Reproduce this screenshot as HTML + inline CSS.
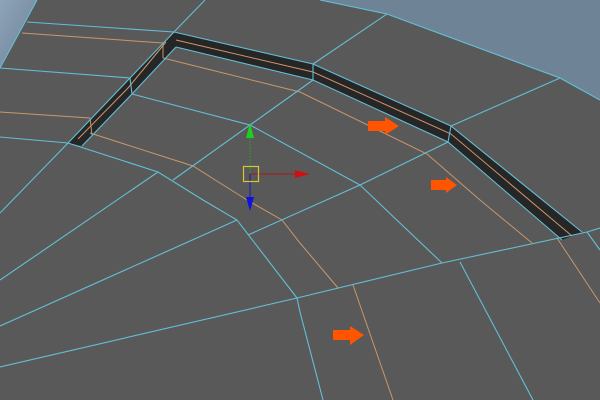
<!DOCTYPE html>
<html><head><meta charset="utf-8"><style>
html,body{margin:0;padding:0;width:600px;height:400px;overflow:hidden;background:#595959}
svg{display:block}
</style></head><body>
<svg width="600" height="400" viewBox="0 0 600 400" xmlns="http://www.w3.org/2000/svg">
<defs>
<linearGradient id="sky" x1="0" y1="0" x2="1" y2="1">
<stop offset="0" stop-color="#8ea4b8"/><stop offset="1" stop-color="#6c8094"/>
</linearGradient>
</defs>
<rect width="600" height="400" fill="#595959"/>
<polygon points="0,0 37,0 0,68" fill="url(#sky)"/>
<polygon points="320,0 600,0 600,100 560,78 387,14" fill="#6f8397"/>
<!-- groove -->
<polygon points="68,143 130,78 174,32 313,64 451,126 582,232 562,240 448,142 313,80 176,47 132,94 82,146" fill="#262626"/>
<g fill="none" stroke="#c8976c" stroke-width="1">
<polyline points="22,33 163,43"/>
<polyline points="0,112 90,118"/>
<polyline points="163,58 300,92 427,154 480,200 532,243"/>
<polyline points="90,133 193,166 247,200 282,220 300,243 338,288"/>
<polyline points="353,285 393,400"/>
<polyline points="557,238 600,303"/>
<polyline points="166,42 128,88 78,139"/>
<polyline points="176,40 313,72 451,134 572,236"/>
<line x1="163" y1="43" x2="163" y2="58"/>
<line x1="90" y1="118" x2="92" y2="135"/>
</g>
<g fill="none" stroke="#63bfd6" stroke-width="1.1">
<polyline points="37,0 0,68"/>
<polyline points="320,0 387,14 560,78 600,100"/>
<polyline points="27,22 174,32"/>
<polyline points="205,0 174,32"/>
<polyline points="174,32 313,64 451,126 582,232"/>
<polyline points="174,32 130,78 68,143"/>
<polyline points="176,47 132,94 82,146"/>
<polyline points="176,47 313,80 448,142 562,240"/>
<line x1="130" y1="78" x2="132" y2="94"/>
<line x1="313" y1="64" x2="313" y2="80"/>
<line x1="451" y1="126" x2="448" y2="142"/>
<polyline points="0,68 130,78"/>
<polyline points="0,137 68,143"/>
<polyline points="68,143 158,172 203,200 237,220 297,298"/>
<polyline points="68,143 0,213"/>
<polyline points="158,172 0,280"/>
<polyline points="132,94 250,125 313,80"/>
<polyline points="250,125 173,180"/>
<polyline points="250,125 360,185 448,142"/>
<polyline points="360,185 442,263"/>
<polyline points="360,185 248,235"/>
<polyline points="237,220 0,326"/>
<polyline points="0,367 297,298 442,263 587,232 600,228"/>
<polyline points="297,298 300,312 323,400"/>
<polyline points="460,262 533,400"/>
<polyline points="587,232 600,250"/>
<polyline points="387,14 313,64"/>
<polyline points="560,78 451,126"/>
</g>
<!-- arrows -->
<g fill="#ff5500">
<polygon points="368,121 385,121 385,117 399,126 385,135 385,131 368,131"/>
<polygon points="431,180 446,180 446,177 457,185 446,193 446,190 431,190"/>
<polygon points="333,330 350,330 350,326 364,335 350,345 350,340 333,340"/>
</g>
<!-- gizmo -->
<line x1="250" y1="138" x2="250" y2="174" stroke="#2a9a2a" stroke-width="1" stroke-dasharray="2,1"/>
<polygon points="250,123 254,138 246,138" fill="#1ed01e"/>
<line x1="250" y1="174" x2="296" y2="174" stroke="#a81818" stroke-width="1"/>
<polygon points="310,174 295,170 295,178" fill="#d01010"/>
<line x1="250" y1="174" x2="250" y2="198" stroke="#1818b0" stroke-width="1"/>
<polygon points="250,211 246,197 254,197" fill="#1010e0"/>
<rect x="243.5" y="166.5" width="15" height="15" fill="none" stroke="#d6c82a" stroke-width="1.2"/>
</svg>
</body></html>
